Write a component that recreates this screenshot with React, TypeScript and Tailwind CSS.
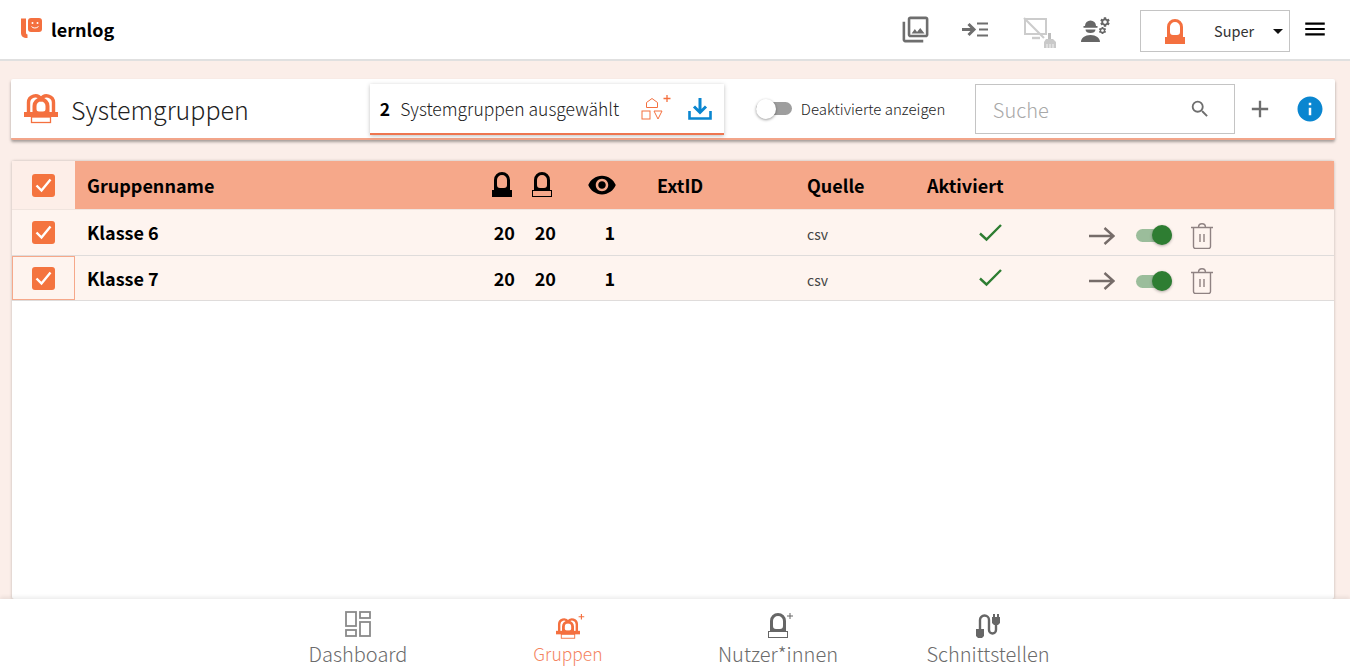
import React from "react";
import { MdOutlinePhotoLibrary, MdInfo, MdSearch, MdAdd, MdMenu, MdVisibility, MdArrowDropDown, MdSettings } from "react-icons/md";

const font = { fontFamily: '"Noto Sans CJK SC","Source Sans Pro","Noto Sans",sans-serif' };

function Person({ color = "#000", filled = false }: { color?: string; filled?: boolean }) {
  return (
    <svg width="20" height="25" viewBox="0 0 20 25" fill="none" className="block">
      <path
        fillRule="evenodd"
        d="M2 18V8a8 8 0 0 1 16 0v10zM5 8a5 5 0 0 1 10 0v5a3 3 0 0 1-3 3H8a3 3 0 0 1-3-3z"
        fill={color}
      />
      {filled ? (
        <rect x="0" y="18" width="20" height="7" fill={color} />
      ) : (
        <rect x="0.500" y="18.500" width="19" height="6" stroke={color} strokeWidth="1" fill="none" />
      )}
    </svg>
  );
}

function GroupIcon({ w = 34, h = 30, plus = false }: { w?: number; h?: number; plus?: boolean }) {
  const c = "#f4703f";
  return (
    <svg width={w} height={h} viewBox="0 0 34 30" fill="none" className="block overflow-visible">
      <path d="M4.500 20V9.500a6.800 6.800 0 0 1 12.500-3.500a6.800 6.800 0 0 1 12.500 3.500V20" stroke={c} strokeWidth="3.400" />
      <path
        fillRule="evenodd"
        d="M8.500 20v-7a8.500 8.500 0 0 1 17 0v7zM12.500 13a4.500 4.500 0 0 1 9 0v3a2.500 2.500 0 0 1-2.500 2.500h-4a2.500 2.500 0 0 1-2.500-2.500z"
        fill={c}
      />
      <rect x="0" y="19" width="34" height="5" fill={c} />
      <rect x="7.500" y="24" width="19" height="5.500" fill="#fff" stroke={c} strokeWidth="1.300" />
      {plus && <path d="M36 -5v8M32 -1h8" stroke={c} strokeWidth="1.600" />}
    </svg>
  );
}

function Check() {
  return (
    <span className="w-[23px] h-[23px] rounded-[3px] bg-[#f4743f] flex items-center justify-center">
      <svg width="17" height="15" viewBox="0 0 17 15" fill="none">
        <path d="M1.500 7.500l5 5 9-11" stroke="#fff" strokeWidth="2.400" />
      </svg>
    </span>
  );
}

function Row({ name, focus, h }: { name: string; focus?: boolean; h: string }) {
  const bold = "shrink-0 flex items-center pb-[1px] text-[18px] font-bold text-black leading-none";
  return (
    <div className={`flex ${h} bg-[#fef4ef] border-b border-[#dfdcdb] items-stretch`}>
      <div className={`w-[63px] shrink-0 flex items-center justify-center ${focus ? "border border-[#f6a88a]" : ""}`}>
        <Check />
      </div>
      <div className={`w-[405px] pl-3 ${bold}`}>{name}</div>
      <div className={`w-[35px] justify-end ${bold}`}>20</div>
      <div className={`w-[41px] justify-end ${bold}`}>20</div>
      <div className={`w-[59px] justify-end ${bold}`}>1</div>
      <div className="w-[192px] shrink-0" />
      <div className="w-[120px] shrink-0 flex items-center pt-[3px] text-[14px] text-[#444] leading-none">csv</div>
      <div className="w-[126px] shrink-0 flex items-center justify-center">
        <svg width="23" height="18" viewBox="0 0 23 18" fill="none">
          <path d="M1 9.500l6.500 6L22 1" stroke="#2e7d32" strokeWidth="2.400" />
        </svg>
      </div>
      <div className="flex items-center pl-[36px] pt-[6px]">
        <svg width="26" height="18" viewBox="0 0 26 18" fill="none">
          <path d="M0 9h24M15.500 1l9 8-9 8" stroke="#766c69" strokeWidth="2.400" />
        </svg>
        <div className="relative w-[36px] h-[13px] rounded-full bg-[#9bbd9b] ml-[21px]">
          <span className="absolute right-0 top-[-4px] w-[20px] h-[20px] rounded-full bg-[#2e7d32] shadow-[0_1px_3px_rgba(0,0,0,0.3)]" />
        </div>
        <svg width="22" height="26" viewBox="0 0 22 26" fill="none" className="ml-[19px]">
          <path d="M0 4.500h22M2.500 5v18.500a2 2 0 0 0 2 2h13a2 2 0 0 0 2-2V5M7.500 4.500c0-5 7-5 7 0" stroke="#8f8282" strokeWidth="1.400" />
          <path d="M9 11v8M13 11v8" stroke="#8f8282" strokeWidth="1.400" />
        </svg>
      </div>
    </div>
  );
}

function NavItem({ icon, label, color, small }: { icon: React.ReactNode; label: string; color: string; small?: boolean }) {
  return (
    <div className="w-[210px] flex flex-col items-center">
      <div className="h-[38px] flex items-end justify-center">{icon}</div>
      {small ? (
        <div className="text-[17.500px] leading-[28px] font-light mt-[3px]" style={{ color }}>{label}</div>
      ) : (
        <div className="text-[20px] leading-[28px] font-light mt-[3px]" style={{ color }}>{label}</div>
      )}
    </div>
  );
}

export default function App() {
  const head = "shrink-0 flex items-center pb-[1px] text-[18px] font-bold text-black leading-none";
  return (
    <div style={font} className="w-[1350px] h-[670px] bg-[#fbeee9] flex flex-col overflow-hidden">
      <header className="h-[61px] shrink-0 bg-white border-b-2 border-[#e0e0e0] flex items-center pl-[21px] pr-[22px]">
        <svg width="21" height="20" viewBox="0 0 21 20" fill="none" className="mb-[3px]">
          <path d="M0 0.500h5v14c0 1 .5 2 1.500 2V20C2 20 0 18 0 15z" fill="#f4703f" />
          <rect x="7" y="0" width="14" height="14" rx="3" fill="#f4703f" />
          <circle cx="11.500" cy="5" r="1" fill="#fff" />
          <circle cx="16.500" cy="5" r="1" fill="#fff" />
          <path d="M10.500 8.500c1.500 2 5 2 7 0" stroke="#fff" strokeWidth="1" />
        </svg>
        <span className="ml-[9px] text-[18px] font-bold text-black leading-none mb-[2px]">lernlog</span>
        <div className="flex-1" />
        <MdOutlinePhotoLibrary size={31} color="#6e6e6e" className="mr-[31px]" />
        <svg width="26" height="15" viewBox="0 0 26 15" fill="none" className="mr-[35px] mb-[1px]">
          <path d="M0 7.500h11M6.500 2l5.500 5.500L6.500 13" stroke="#6e6e6e" strokeWidth="3" />
          <path d="M15 1.500h11M17 7.500h9M15 13.500h11" stroke="#6e6e6e" strokeWidth="2.200" />
        </svg>
        <svg width="34" height="31" viewBox="0 0 34 31" fill="none" className="mr-[24px] mt-[6px]">
          <path d="M2 2h21v15H2z" stroke="#cccccc" strokeWidth="2" />
          <path d="M1 1l20 20" stroke="#cccccc" strokeWidth="2.200" />
          <path d="M9 21h8" stroke="#cccccc" strokeWidth="2.400" />
          <rect x="25" y="16" width="3" height="7" fill="#bdbdbd" />
          <path d="M23 22h7l3 3v6H21v-6z" fill="#c9c9c9" />
          <path d="M24 27v4M27 27v4M30 27v4" stroke="#fff" strokeWidth="0.800" />
        </svg>
        <span className="relative w-[28px] h-[24px] mr-[31px] block">
          <svg width="19" height="23" viewBox="0 0 19 23" className="absolute left-0 top-[1px]">
            <path d="M4 7a5.500 5.500 0 0 1 11 0h1.500v1.800h-14V7z" fill="#666" />
            <path d="M4.500 10.500h10c0 2.500-2.200 3.500-5 3.500s-5-1-5-3.500zM0 23c0-4 4-7 9.500-7S19 19 19 23z" fill="#666" />
          </svg>
          <MdSettings size={12} color="#666" className="absolute left-[18px] top-[-2px]" />
          <MdSettings size={9} color="#666" className="absolute left-[17px] top-[8px]" />
        </span>
        <div className="w-[150px] h-[42px] mt-[3px] border border-[#c4c4c4] flex items-center relative">
          <span className="ml-[24px]"><Person color="#f4703f" filled /></span>
          <span className="ml-[29px] text-[14.500px] text-[#333] leading-none">Super</span>
          <MdArrowDropDown size={24} color="#111" className="absolute right-[-1px] top-[8px]" />
        </div>
        <MdMenu size={26} color="#000" className="ml-[12px] mb-[1px]" />
      </header>

      <main className="flex-1 min-h-0 flex flex-col pt-[18px] pl-[11px] pr-[15px]">
        <section className="h-[61px] shrink-0 rounded-[2px] bg-white border-b-2 border-[#f2a58a] shadow-[0_2px_3px_rgba(0,0,0,0.35)] flex items-center">
          <span className="ml-[13px] mb-[1px]"><GroupIcon /></span>
          <h1 className="ml-[13px] pt-[2px] text-[25px] font-light text-[#222] leading-none whitespace-nowrap">Systemgruppen</h1>
          <div className="ml-[121px] mt-[5px] w-[354px] h-[51px] shrink-0 self-start bg-white border-b-2 border-[#ee7650] shadow-[0_1px_4px_rgba(0,0,0,0.25)] flex items-center pl-[10px]">
            <span className="text-[17.500px] font-bold text-black leading-none">2</span>
            <span className="ml-[10px] w-[220px] text-[17.500px] font-light text-[#222] leading-none whitespace-nowrap">Systemgruppen ausgewählt</span>
            <svg width="30" height="28" viewBox="0 0 30 28" fill="none" className="ml-[21px]">
              <path d="M11 4.500l5.500 4v5h-11v-5z" stroke="#f4703f" strokeWidth="1" transform="translate(0 -1)" />
              <rect x="1" y="16" width="8" height="8" stroke="#f4703f" strokeWidth="1" />
              <path d="M13 16h8l-4 8z" stroke="#f4703f" strokeWidth="1" />
              <path d="M22.500 3.500h7M26 0v7" stroke="#f4703f" strokeWidth="1.300" />
            </svg>
            <svg width="24" height="24" viewBox="0 0 24 24" fill="none" className="ml-[17px]">
              <path d="M12 1v14M6 9.500l6 6 6-6" stroke="#0a86d0" strokeWidth="3" />
              <path d="M1.500 14v7.500h21V14" stroke="#0a86d0" strokeWidth="2.600" />
            </svg>
          </div>
          <div className="ml-[32px] relative w-[36px] h-[14px] shrink-0 flex items-center">
            <div className="w-full h-[13px] rounded-full bg-[#9e9e9e]" />
            <span className="absolute left-0 top-[-3px] w-[20px] h-[20px] rounded-full bg-white shadow-[0_1px_3px_rgba(0,0,0,0.4)]" />
          </div>
          <span className="ml-[9px] w-[144px] text-[15px] font-light text-[#222] leading-none whitespace-nowrap">Deaktivierte anzeigen</span>
          <div className="ml-[30px] w-[260px] h-[50px] shrink-0 border border-[#c4c4c4] flex items-center justify-between pl-[17px] pr-[23px]">
            <span className="pt-[2px] text-[20px] font-light text-[#a8a8a8] leading-none">Suche</span>
            <MdSearch size={22} color="#6e6e6e" />
          </div>
          <MdAdd size={28} color="#6e6e6e" className="ml-[11px] shrink-0" />
          <MdInfo size={30} color="#0a86d0" className="ml-[21px] shrink-0" />
        </section>

        <section className="flex-1 min-h-0 mt-[21px] mx-[1px] rounded-[2px] bg-white shadow-[0_0_3px_rgba(0,0,0,0.25)] flex flex-col">
          <div className="flex h-[49px] shrink-0 bg-[#f6a88a] items-stretch border-b-[1px] border-[#f0e4de]">
            <div className="w-[63px] shrink-0 bg-[#fdeee8] flex items-center justify-center"><Check /></div>
            <div className={`w-[405px] pl-3 ${head}`}>Gruppenname</div>
            <div className={`w-[32px] justify-end ${head}`}><Person filled /></div>
            <div className={`w-[40px] justify-end ${head}`}><Person /></div>
            <div className={`w-[65px] justify-end ${head}`}><MdVisibility size={30} color="#000" /></div>
            <div className={`w-[190px] pl-[40px] ${head}`}>ExtID</div>
            <div className={`w-[120px] ${head}`}>Quelle</div>
            <div className={head}>Aktiviert</div>
          </div>
          <Row name="Klasse 6" h="h-[46px]" />
          <Row name="Klasse 7" focus h="h-[45px]" />
        </section>
      </main>

      <nav className="h-[71px] shrink-0 bg-white shadow-[0_-2px_4px_rgba(0,0,0,0.08)] relative flex justify-center pr-[4px]">
        <NavItem
          color="#6b6b6b"
          label="Dashboard"
          icon={
            <svg width="26" height="26" viewBox="0 0 26 26" fill="none" className="block">
              <rect x="1" y="1" width="10" height="14" stroke="#8a8a8a" strokeWidth="1.800" />
              <rect x="15" y="1" width="10" height="6" stroke="#8a8a8a" strokeWidth="1.800" />
              <rect x="15" y="11" width="10" height="14" stroke="#8a8a8a" strokeWidth="1.800" />
              <rect x="1" y="19" width="10" height="6" stroke="#8a8a8a" strokeWidth="1.800" />
            </svg>
          }
        />
        <NavItem color="#f4845f" label="Gruppen" small icon={<span className="mb-[-2px]"><GroupIcon w={24} h={22} plus /></span>} />
        <NavItem
          color="#6b6b6b"
          label="Nutzer*innen"
          icon={
            <span className="relative mb-[-1px]">
              <Person color="#666" />
              <svg width="6" height="6" viewBox="0 0 6 6" className="absolute right-[-5px] top-[0px]"><path d="M3 0v6M0 3h6" stroke="#666" /></svg>
            </span>
          }
        />
        <NavItem
          color="#6b6b6b"
          label="Schnittstellen"
          icon={
            <svg width="24" height="24" viewBox="0 0 24 24" fill="none" className="block mb-[-1px]">
              <path d="M4 16V6a4.500 4.500 0 0 1 9 0v10a3.500 3.500 0 0 0 7 0V9" stroke="#666" strokeWidth="2.400" />
              <path d="M0 15h8v7l-2 2H2l-2-2z" fill="#666" />
              <path d="M16 3h8v6l-2 2h-4l-2-2z" fill="#666" />
              <path d="M18 0v3M22 0v3" stroke="#666" strokeWidth="2" />
            </svg>
          }
        />
      </nav>
    </div>
  );
}
